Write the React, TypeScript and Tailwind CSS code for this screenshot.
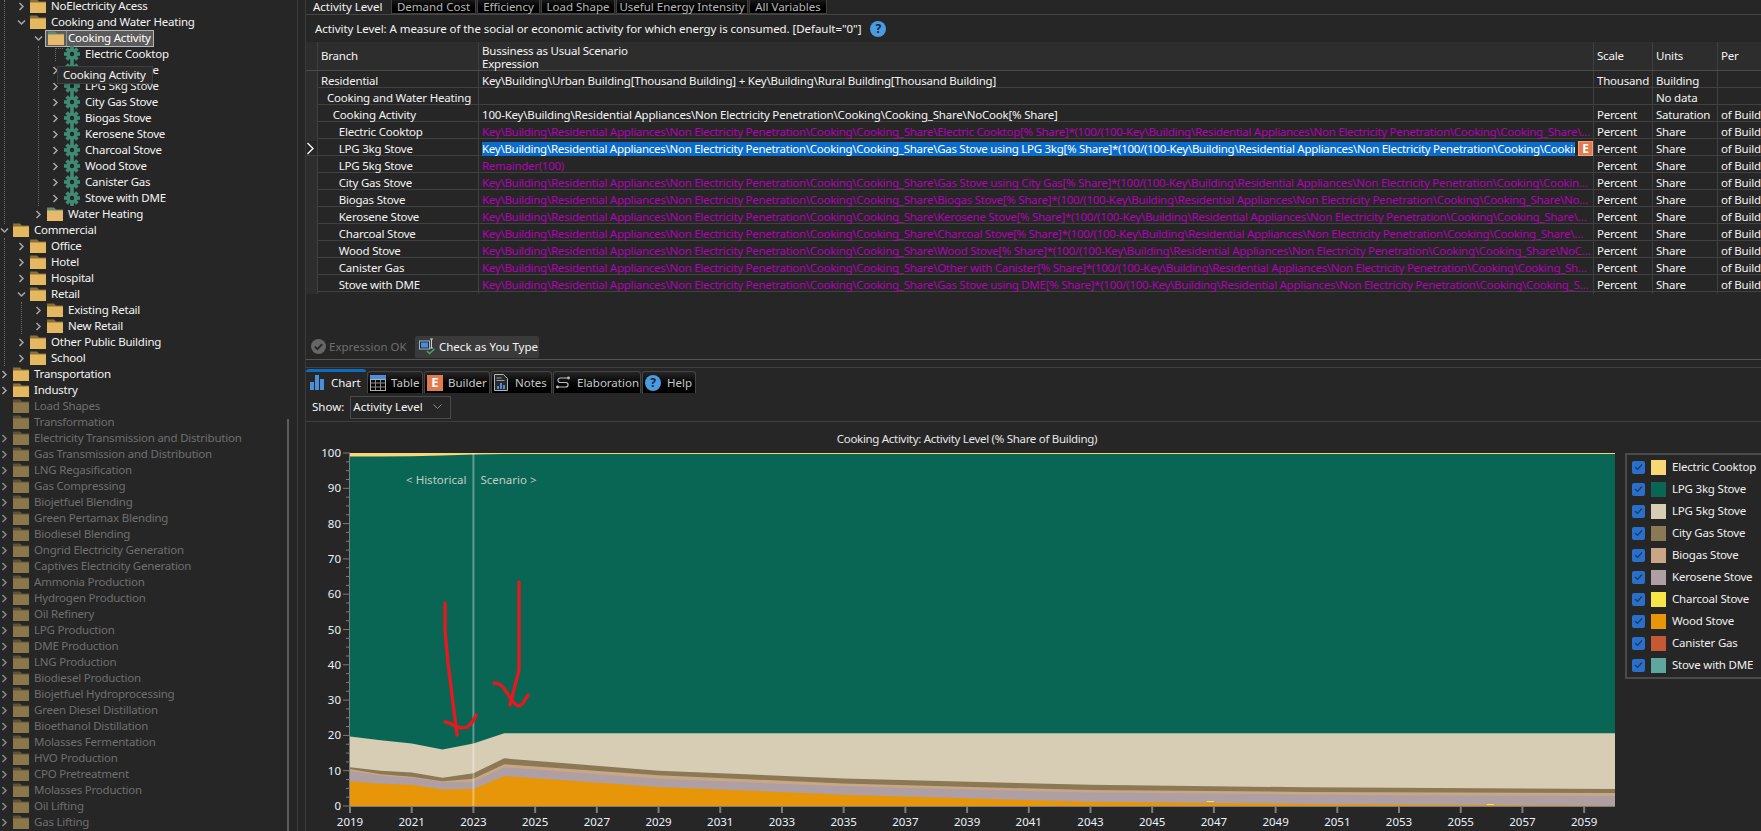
import { ReactNode } from "react"

const FONT = "font-['Noto_Sans','Open_Sans',sans-serif]"

type TreeRow = { label: string; level: number; icon?: "folder" | "open" | "gear"; chevron?: "right" | "down" | "none"; dim?: boolean; selected?: boolean }

const tree: TreeRow[] = [
  { label: "NoElectricity Acess", level: 1 },
  { label: "Cooking and Water Heating", level: 1, chevron: "down" },
  { label: "Cooking Activity", level: 2, chevron: "down", icon: "open", selected: true },
  { label: "Electric Cooktop", level: 3, icon: "gear", chevron: "none" },
  { label: "LPG 3kg Stove", level: 3, icon: "gear" },
  { label: "LPG 5kg Stove", level: 3, icon: "gear" },
  { label: "City Gas Stove", level: 3, icon: "gear" },
  { label: "Biogas Stove", level: 3, icon: "gear" },
  { label: "Kerosene Stove", level: 3, icon: "gear" },
  { label: "Charcoal Stove", level: 3, icon: "gear" },
  { label: "Wood Stove", level: 3, icon: "gear" },
  { label: "Canister Gas", level: 3, icon: "gear" },
  { label: "Stove with DME", level: 3, icon: "gear" },
  { label: "Water Heating", level: 2, icon: "open" },
  { label: "Commercial", level: 0, chevron: "down" },
  { label: "Office", level: 1 },
  { label: "Hotel", level: 1 },
  { label: "Hospital", level: 1 },
  { label: "Retail", level: 1, chevron: "down" },
  { label: "Existing Retail", level: 2 },
  { label: "New Retail", level: 2 },
  { label: "Other Public Building", level: 1 },
  { label: "School", level: 1 },
  { label: "Transportation", level: 0 },
  { label: "Industry", level: 0 },
  { label: "Load Shapes", level: -1, chevron: "none", dim: true },
  { label: "Transformation", level: -1, chevron: "none", dim: true },
  ...[
    "Electricity Transmission and Distribution",
    "Gas Transmission and Distribution",
    "LNG Regasification",
    "Gas Compressing",
    "Biojetfuel Blending",
    "Green Pertamax Blending",
    "Biodiesel Blending",
    "Ongrid Electricity Generation",
    "Captives Electricity Generation",
    "Ammonia Production",
    "Hydrogen Production",
    "Oil Refinery",
    "LPG Production",
    "DME Production",
    "LNG Production",
    "Biodiesel Production",
    "Biojetfuel Hydroprocessing",
    "Green Diesel Distillation",
    "Bioethanol Distillation",
    "Molasses Fermentation",
    "HVO Production",
    "CPO Pretreatment",
    "Molasses Production",
    "Oil Lifting",
    "Gas Lifting",
  ].map((label) => ({ label, level: 0, dim: true })),
]

function Folder({ dim, open }: { dim?: boolean; open?: boolean }) {
  const body = dim ? "#8a7649" : open ? "#e6b96c" : "#e3b860"
  const tab = dim ? "#5f5238" : open ? "#5f8a72" : "#8a7038"
  return (
    <svg width="16" height="14" viewBox="0 0 16 14" className="shrink-0">
      <path d="M0 0.5h7l2 2h7v1.5H0z" fill={tab} />
      <rect x="0" y="3.5" width="16" height="10.5" fill={body} />
    </svg>
  )
}

function Gear() {
  return (
    <svg width="16" height="16" viewBox="0 0 16 16" className="shrink-0">
      <g fill="#3f8a73">
        <circle cx="8" cy="8" r="5.8" />
        <rect x="6.2" y="0" width="3.6" height="16" />
        <rect x="0" y="6.2" width="16" height="3.6" />
        <rect x="6.2" y="0.3" width="3.6" height="15.4" transform="rotate(45 8 8)" />
        <rect x="6.2" y="0.3" width="3.6" height="15.4" transform="rotate(-45 8 8)" />
      </g>
      <circle cx="8" cy="8" r="2.2" fill="#262626" />
    </svg>
  )
}

function Chevron({ down, dim }: { down?: boolean; dim?: boolean }) {
  return (
    <svg width="9" height="9" viewBox="0 0 9 9" className="shrink-0">
      <path d={down ? "M1 2.5L4.5 6L8 2.5" : "M2.5 1L6 4.5L2.5 8"} fill="none" stroke={dim ? "#8a8a8a" : "#a8a8a8"} strokeWidth="1.5" />
    </svg>
  )
}

function Row({ row }: { row: TreeRow }) {
  const left = row.level * 17
  const chevron = row.chevron ?? "right"
  return (
    <div className="flex h-4 items-center whitespace-nowrap" style={{ paddingLeft: left }}>
      <div className="flex w-[13px] shrink-0 items-center">{chevron !== "none" && <Chevron down={chevron === "down"} dim={row.dim} />}</div>
      {row.selected ? (
        <div className="-ml-[2px] flex h-[17px] w-[109px] shrink-0 items-center border border-[#b5b5b5] bg-[#5b5b5b]">
          <div className="flex h-full items-center border-r border-[#8d8d8d] px-[2px]">
            <Folder open />
          </div>
          <span className="pl-[1px] text-white">{row.label}</span>
        </div>
      ) : (
        <>
          {row.icon === "gear" ? <Gear /> : <Folder dim={row.dim} open={row.icon === "open"} />}
          <span className={`ml-[5px] ${row.dim ? "text-[#6f6f6f]" : "text-[#f4f4f4]"}`}>{row.label}</span>
        </>
      )}
    </div>
  )
}

function TreePanel() {
  return (
    <aside className="relative h-full w-[298px] shrink-0 overflow-hidden border-r border-[#3a3a3a] text-[11.5px] leading-4 tracking-[-0.22px]">
      <div className="absolute left-[4px] top-0 h-[224px] border-l border-dotted border-[#6a6a6a]" />
      <div className="absolute left-[4px] top-[238px] h-[128px] border-l border-dotted border-[#6a6a6a]" />
      <div className="absolute left-[21px] top-[302px] h-[32px] border-l border-dotted border-[#6a6a6a]" />
      <div className="absolute left-[38px] top-[46px] h-[160px] border-l border-dotted border-[#6a6a6a]" />
      <div className="absolute left-[55px] top-[48px] h-[13px] w-[8px] border-l border-t border-dotted border-[#6a6a6a]" />
      <div className="-mt-[2px]">
        {tree.map((row) => (
          <Row key={row.label} row={row} />
        ))}
      </div>
      <div className="absolute left-[287px] top-[419px] h-[412px] w-[2px] bg-[#5c5c5c]" />
      <div className="absolute left-[57px] top-[66px] flex h-[18px] w-[96px] items-center whitespace-nowrap border border-[#3f3f3f] bg-[#2b2b2b] pl-[5px] text-[#f4f4f4] shadow-md">
        Cooking Activity
      </div>
    </aside>
  )
}

const topTabs = [
  { label: "Demand Cost", w: "w-[85px]" },
  { label: "Efficiency", w: "w-[63px]" },
  { label: "Load Shape", w: "w-[74px]" },
  { label: "Useful Energy Intensity", w: "w-[132px]" },
  { label: "All Variables", w: "w-[78px]" },
]

function TopTabs() {
  return (
    <div className="flex h-[15px] items-end gap-[1px] whitespace-nowrap border-b border-[#444444] text-[11.5px] leading-[15px]">
      <div className="flex h-[15px] w-[84px] items-center pl-[7px] text-[#f4f4f4]">Activity Level</div>
      {topTabs.map((t) => (
        <div
          key={t.label}
          className={`flex h-[15px] items-center justify-center border-x border-b border-[#3f3f3f] bg-gradient-to-b from-[#1d1d1d] to-[#000000] text-[#b8b8b8] ${t.w}`}
        >
          {t.label}
        </div>
      ))}
    </div>
  )
}

const BASE = "Key\\Building\\Residential Appliances\\Non Electricity Penetration\\Cooking\\Cooking_Share\\"
const tail = (name: string) => `${BASE}${name}[% Share]*(100/(100-${BASE}NoCook[% Share]))`

type GridRow = { branch: string; indent: number; expr: string; kind?: "plain" | "calc" | "sel"; scale?: string; units: string; per?: string }

const gridRows: GridRow[] = [
  { branch: "Residential", indent: 0, expr: "Key\\Building\\Urban Building[Thousand Building] + Key\\Building\\Rural Building[Thousand Building]", scale: "Thousand", units: "Building" },
  { branch: "Cooking and Water Heating", indent: 1, expr: "", units: "No data" },
  { branch: "Cooking Activity", indent: 2, expr: `100-${BASE}NoCook[% Share]`, scale: "Percent", units: "Saturation", per: "of Building" },
  { branch: "Electric Cooktop", indent: 3, expr: tail("Electric Cooktop"), kind: "calc", scale: "Percent", units: "Share", per: "of Building" },
  { branch: "LPG 3kg Stove", indent: 3, expr: tail("Gas Stove using LPG 3kg"), kind: "sel", scale: "Percent", units: "Share", per: "of Building" },
  { branch: "LPG 5kg Stove", indent: 3, expr: "Remainder(100)", kind: "calc", scale: "Percent", units: "Share", per: "of Building" },
  { branch: "City Gas Stove", indent: 3, expr: tail("Gas Stove using City Gas"), kind: "calc", scale: "Percent", units: "Share", per: "of Building" },
  { branch: "Biogas Stove", indent: 3, expr: tail("Biogas Stove"), kind: "calc", scale: "Percent", units: "Share", per: "of Building" },
  { branch: "Kerosene Stove", indent: 3, expr: tail("Kerosene Stove"), kind: "calc", scale: "Percent", units: "Share", per: "of Building" },
  { branch: "Charcoal Stove", indent: 3, expr: tail("Charcoal Stove"), kind: "calc", scale: "Percent", units: "Share", per: "of Building" },
  { branch: "Wood Stove", indent: 3, expr: tail("Wood Stove"), kind: "calc", scale: "Percent", units: "Share", per: "of Building" },
  { branch: "Canister Gas", indent: 3, expr: tail("Other with Canister"), kind: "calc", scale: "Percent", units: "Share", per: "of Building" },
  { branch: "Stove with DME", indent: 3, expr: tail("Gas Stove using DME"), kind: "calc", scale: "Percent", units: "Share", per: "of Building" },
]

const COLS = "grid grid-cols-[12px_161px_1115px_59px_65px_1fr]"

function ExpressionGrid() {
  return (
    <div className="text-[11.5px] leading-4 tracking-[-0.2px] text-[#f4f4f4]">
      <div className={`${COLS} h-[29px] border-b border-[#4a4a4a] bg-[#2d2d2d]`}>
        <div className="border-r border-[#3f3f3f]" />
        <div className="flex items-center border-r border-[#3f3f3f] pl-[3px]">Branch</div>
        <div className="border-r border-[#3f3f3f] pl-[3px] pt-[2px] leading-[13px]">
          Bussiness as Usual Scenario
          <br />
          Expression
        </div>
        <div className="flex items-center border-r border-[#3f3f3f] pl-[3px]">Scale</div>
        <div className="flex items-center border-r border-[#3f3f3f] pl-[3px]">Units</div>
        <div className="flex items-center pl-[3px]">Per</div>
      </div>
      {gridRows.map((r, i) => (
        <div key={r.branch} className={`${COLS} h-[17px] border-b border-[#414141] leading-[19px]`}>
          <div className={`flex items-center border-r border-[#3f3f3f] ${i === 4 ? "" : "bg-[#2d2d2d]"}`}>
            {i === 4 && (
              <svg width="9" height="13" viewBox="0 0 9 13">
                <path d="M1.5 1L7 6.5L1.5 12" fill="none" stroke="#ffffff" strokeWidth="1.3" />
              </svg>
            )}
          </div>
          <div className="truncate border-r border-[#3f3f3f]" style={{ paddingLeft: 3 + r.indent * 5.9 }}>
            {r.branch}
          </div>
          {r.kind === "sel" ? (
            <div className="flex min-w-0 items-center border-r border-[#3f3f3f] pl-[3px]">
              <div className="h-[14px] w-[1093px] shrink-0 overflow-hidden whitespace-nowrap bg-[#0a6ccb] leading-[14px] tracking-[-0.28px] text-white">{r.expr}</div>
              <div className="ml-[3px] flex h-[15px] w-[15px] shrink-0 items-center justify-center border border-[#f0a07c] bg-[#e07b4e] text-[12px] font-bold leading-none text-white">E</div>
            </div>
          ) : (
            <div className={`truncate border-r border-[#3f3f3f] pl-[3px] pr-[2px] ${r.kind === "calc" ? "tracking-[-0.28px] text-[#b400b8]" : ""}`}>{r.expr}</div>
          )}
          <div className="whitespace-nowrap border-r border-[#3f3f3f] pl-[3px]">{r.scale}</div>
          <div className="border-r border-[#3f3f3f] pl-[3px]">{r.units}</div>
          <div className="overflow-hidden whitespace-nowrap pl-[3px]">{r.per}</div>
        </div>
      ))}
    </div>
  )
}

function Toolbar() {
  return (
    <div className="flex h-[23px] items-center whitespace-nowrap pl-[5px] text-[11.5px]">
      <div className="flex w-[104px] items-center gap-[3px] text-[#6e6e6e]">
        <svg width="15" height="15" viewBox="0 0 15 15">
          <circle cx="7.5" cy="7.5" r="7.5" fill="#666666" />
          <path d="M3.8 7.6l2.6 2.6 4.8-5" fill="none" stroke="#262626" strokeWidth="1.8" />
        </svg>
        <span>Expression OK</span>
      </div>
      <div className="flex h-[22px] w-[124px] items-center gap-[3px] rounded-[2px] bg-[#3a3a3a] pl-[4px] text-[#f4f4f4]">
        <svg width="17" height="17" viewBox="0 0 17 17">
          <rect x="0.5" y="3" width="10" height="8" fill="#262626" stroke="#9ab8d8" />
          <rect x="2" y="4.5" width="7" height="5" fill="#4a90d9" />
          <path d="M11 1h3M12.5 1v9M11 10h3" stroke="#cfcfcf" fill="none" />
          <path d="M8 13l2.5 2.5L15.5 11" stroke="#3fa46a" strokeWidth="1.6" fill="none" />
        </svg>
        <span>Check as You Type</span>
      </div>
    </div>
  )
}

function BottomTab({ label, w, gap, icon, active }: { label: string; w: string; gap: string; icon: ReactNode; active?: boolean }) {
  return (
    <div
      className={`flex items-center whitespace-nowrap rounded-t-[3px] text-[11.5px] ${w} ${gap} ${
        active
          ? "h-[24px] border-t-[3px] border-[#0f6cbd] bg-[#262626] pl-[4px] text-[#f4f4f4]"
          : "h-[22px] border border-b-0 border-[#444444] bg-gradient-to-b from-[#262626] to-[#000000] pl-[2px] text-[#c8c8c8]"
      }`}
    >
      {icon}
      <span>{label}</span>
    </div>
  )
}

function BottomTabs() {
  return (
    <div className="flex h-[24px] items-end gap-[1px]">
      <BottomTab
        active
        label="Chart"
        w="w-[60px]"
        gap="gap-[7px]"
        icon={
          <svg width="14" height="15" viewBox="0 0 14 15">
            <rect x="0" y="7" width="4" height="8" fill="#4a90d9" />
            <rect x="5" y="0" width="4" height="15" fill="#4a90d9" />
            <rect x="10" y="4" width="4" height="11" fill="#4a90d9" />
          </svg>
        }
      />
      <BottomTab
        label="Table"
        w="w-[56px]"
        gap="gap-[5px]"
        icon={
          <svg width="16" height="16" viewBox="0 0 16 16">
            <rect x="0" y="0" width="16" height="5" fill="#4a90d9" />
            <rect x="0.5" y="4.5" width="15" height="11" fill="none" stroke="#b0b0b0" />
            <path d="M5.5 5v10M10.5 5v10M1 8h14M1 12h14" stroke="#8a8a8a" />
          </svg>
        }
      />
      <BottomTab
        label="Builder"
        w="w-[66px]"
        gap="gap-[5px]"
        icon={
          <div className="flex h-[16px] w-[16px] items-center justify-center bg-[#e07b4e] text-[13px] font-bold leading-none text-white">E</div>
        }
      />
      <BottomTab
        label="Notes"
        w="w-[61px]"
        gap="gap-[7px]"
        icon={
          <svg width="14" height="17" viewBox="0 0 14 17">
            <path d="M0.5 0.5h9l4 4v12h-13z" fill="#2a2a2a" stroke="#b5b5b5" />
            <path d="M2.5 4h5M2.5 6.5h8" stroke="#9a9a9a" />
            <rect x="3" y="12" width="2" height="3" fill="#4a90d9" />
            <rect x="6" y="9" width="2" height="6" fill="#4a90d9" />
            <rect x="9" y="11" width="2" height="4" fill="#4a90d9" />
          </svg>
        }
      />
      <BottomTab
        label="Elaboration"
        w="w-[88px]"
        gap="gap-[7px]"
        icon={
          <svg width="14" height="13" viewBox="0 0 14 13">
            <path d="M12.5 2H4.2a2.2 2.2 0 0 0 0 4.5h5.6a2.2 2.2 0 0 1 0 4.5H1.5" fill="none" stroke="#bdbdbd" strokeWidth="1.2" />
            <circle cx="1.5" cy="11" r="1.4" fill="#bdbdbd" />
            <circle cx="12.5" cy="2" r="1.4" fill="#bdbdbd" />
          </svg>
        }
      />
      <BottomTab
        label="Help"
        w="w-[54px]"
        gap="gap-[6px]"
        icon={
          <div className="flex h-[16px] w-[16px] items-center justify-center rounded-full bg-[#4a9be0] text-[12px] font-bold leading-none text-[#10243a]">?</div>
        }
      />
    </div>
  )
}

// chart geometry, page coordinates minus the svg origin (306, 422)
const X0 = 44
const X1 = 1309
const Y0 = 384
const Y100 = 31
const xOf = (year: number) => X0 + ((year - 2019) * (X1 - X0)) / 41
const yOf = (v: number) => Y0 - (v * (Y0 - Y100)) / 100

const YEARS = [2019, 2020, 2021, 2022, 2023, 2024, 2029, 2035, 2043, 2050, 2060]
const series = [
  { name: "Electric Cooktop", color: "#f9d776", top: YEARS.map(() => 100) },
  { name: "LPG 3kg Stove", color: "#096554", top: [99, 99, 99.1, 99.3, 99.6, 99.7, 99.7, 99.7, 99.7, 99.7, 99.7] },
  { name: "LPG 5kg Stove", color: "#d7cdb5", top: [19.7, 18.6, 17.7, 16, 17.7, 20.6, 20.6, 20.6, 20.6, 20.6, 20.6] },
  { name: "City Gas Stove", color: "#8b7855", top: [11, 10, 9.5, 8, 9.3, 13.5, 10, 7.8, 6, 5.3, 4.8] },
  { name: "Biogas Stove", color: "#c9a684", top: [10.5, 9, 8.3, 7, 7.7, 11.8, 8.7, 6.4, 4.5, 4, 3.7] },
  { name: "Kerosene Stove", color: "#ad9fa3", top: [10, 8.6, 8, 6.7, 6.8, 11, 7.7, 5.6, 3.8, 3.2, 2.8] },
  { name: "Wood Stove", color: "#e79609", top: [7, 6.3, 6, 4.7, 4.8, 8.5, 5.4, 3.2, 1.2, 0.6, 0.1] },
]

const legend = [
  ["Electric Cooktop", "#f9d776"],
  ["LPG 3kg Stove", "#096554"],
  ["LPG 5kg Stove", "#d7cdb5"],
  ["City Gas Stove", "#8b7855"],
  ["Biogas Stove", "#c9a684"],
  ["Kerosene Stove", "#ad9fa3"],
  ["Charcoal Stove", "#f6e646"],
  ["Wood Stove", "#e79609"],
  ["Canister Gas", "#c45a33"],
  ["Stove with DME", "#5ea7a0"],
]

function Chart() {
  const yTicks = Array.from({ length: 41 }, (_, i) => i * 2.5)
  const xTicks = Array.from({ length: 21 }, (_, i) => 2019 + i * 2)
  return (
    <svg width="1319" height="409" viewBox="0 0 1319 409" className="shrink-0">
      <text x="661" y="21" textAnchor="middle" fontSize="11.5" letterSpacing="-0.3" fill="#e6e6e6">
        Cooking Activity: Activity Level (% Share of Building)
      </text>
      {series.map((s) => (
        <polygon
          key={s.name}
          fill={s.color}
          points={[...s.top.map((v, i) => `${xOf(YEARS[i])},${yOf(v)}`), `${X1},${Y0}`, `${X0},${Y0}`].join(" ")}
        />
      ))}
      <rect x="901" y="379" width="7" height="1" fill="#f6e646" />
      <rect x="1181" y="382" width="7" height="1" fill="#f6e646" />
      <path d={`M${X0 - 0.5} ${Y100}V${Y0 + 0.5}H${X1}`} fill="none" stroke="#7d7d7d" />
      {yTicks.map((v) => (
        <line key={v} x1={v % 10 === 0 ? X0 - 7 : X0 - 4} x2={X0} y1={yOf(v)} y2={yOf(v)} stroke="#7d7d7d" />
      ))}
      {yTicks
        .filter((v) => v % 10 === 0)
        .map((v) => (
          <text key={v} x={X0 - 9} y={yOf(v) + 4} textAnchor="end" fontSize="11.5" fill="#eaf2fb">
            {v}
          </text>
        ))}
      {xTicks.map((y) => (
        <g key={y}>
          <line x1={xOf(y)} x2={xOf(y)} y1={Y0} y2={Y0 + 7} stroke="#7d7d7d" strokeWidth="2" />
          <text x={xOf(y)} y={Y0 + 20} textAnchor="middle" fontSize="11.5" fill="#eaf2fb">
            {y}
          </text>
        </g>
      ))}
      <line x1={xOf(2023)} x2={xOf(2023)} y1={Y100} y2={Y0} stroke="#ffffff" strokeOpacity="0.35" strokeWidth="2" />
      <text x={xOf(2023) - 7} y="62" textAnchor="end" fontSize="11.5" fill="#c4ccc9">
        {"< Historical"}
      </text>
      <text x={xOf(2023) + 7} y="62" fontSize="11.5" fill="#c4ccc9">
        {"Scenario >"}
      </text>
      {/* hand-drawn red arrows */}
      <g fill="none" stroke="#e5191f" strokeWidth="3.4" strokeLinecap="round" strokeLinejoin="round">
        <path d="M139 181V208L142 241L147 281L151 313" />
        <path d="M139 300C145 300 147 304 151 305C155 306 158 306 161 305C165 303 168 298 170 293" />
        <path d="M213 160V248L204 283" />
        <path d="M188 261C192 261 195 263 197 265C200 269 203 275 206 278C208 281 211 284 213 284C216 284 219 278 222 273" />
      </g>
    </svg>
  )
}

function Legend() {
  return (
    <div className="mt-[31px] h-[226px] w-[136px] border-y-2 border-l-2 border-[#4a4a4a] pt-[1px] text-[11.5px] leading-[22px] tracking-[-0.2px]">
      {legend.map(([name, color]) => (
        <div key={name} className="flex h-[22px] items-center pl-[5px]">
          <div className="flex h-[13px] w-[13px] items-center justify-center rounded-[2px] bg-[#2a6fc9]">
            <svg width="9" height="8" viewBox="0 0 9 8">
              <path d="M1 4l2.5 2.5L8 1.5" fill="none" stroke="#163a66" strokeWidth="1.2" />
            </svg>
          </div>
          <div className="ml-[6px] h-[15px] w-[15px]" style={{ backgroundColor: color }} />
          <span className="ml-[6px] whitespace-nowrap text-[#f0f0f0]">{name}</span>
        </div>
      ))}
    </div>
  )
}

export default function App() {
  return (
    <div className={`flex h-[831px] w-[1761px] overflow-hidden bg-[#262626] text-[#f4f4f4] ${FONT}`}>
      <TreePanel />
      <main className="ml-[7px] flex min-w-0 flex-1 flex-col border-l border-[#3a3a3a]">
        <TopTabs />
        <div className="flex h-[27px] items-center gap-[9px] whitespace-nowrap pl-[9px] pt-[1px] text-[11.5px] tracking-[-0.06px]">
          <span>Activity Level: A measure of the social or economic activity for which energy is consumed. [Default="0"]</span>
          <div className="flex h-[16px] w-[16px] items-center justify-center rounded-full bg-[#4a9be0] text-[12px] font-bold leading-none text-[#10243a]">?</div>
        </div>
        <ExpressionGrid />
        <div className="h-[43px]" />
        <Toolbar />
        <div className="mt-[1px] border-t border-[#555555]" />
        <div className="mt-[7px] border-t border-[#3f3f3f]" />
        <div className="mt-[1px]">
          <BottomTabs />
        </div>
        <div className="flex h-[29px] shrink-0 items-center gap-[6px] border-b border-[#3f3f3f] pl-[6px] text-[11.5px]">
          <span>Show:</span>
          <div className="flex h-[23px] w-[101px] items-center justify-between border border-[#4a4a4a] pl-[2px] pr-[8px]">
            <span>Activity Level</span>
            <svg width="9" height="6" viewBox="0 0 9 6">
              <path d="M0.5 0.5L4.5 4.5L8.5 0.5" fill="none" stroke="#8c8c8c" />
            </svg>
          </div>
        </div>
        <div className="flex min-h-0 flex-1">
          <Chart />
          <Legend />
        </div>
      </main>
    </div>
  )
}
